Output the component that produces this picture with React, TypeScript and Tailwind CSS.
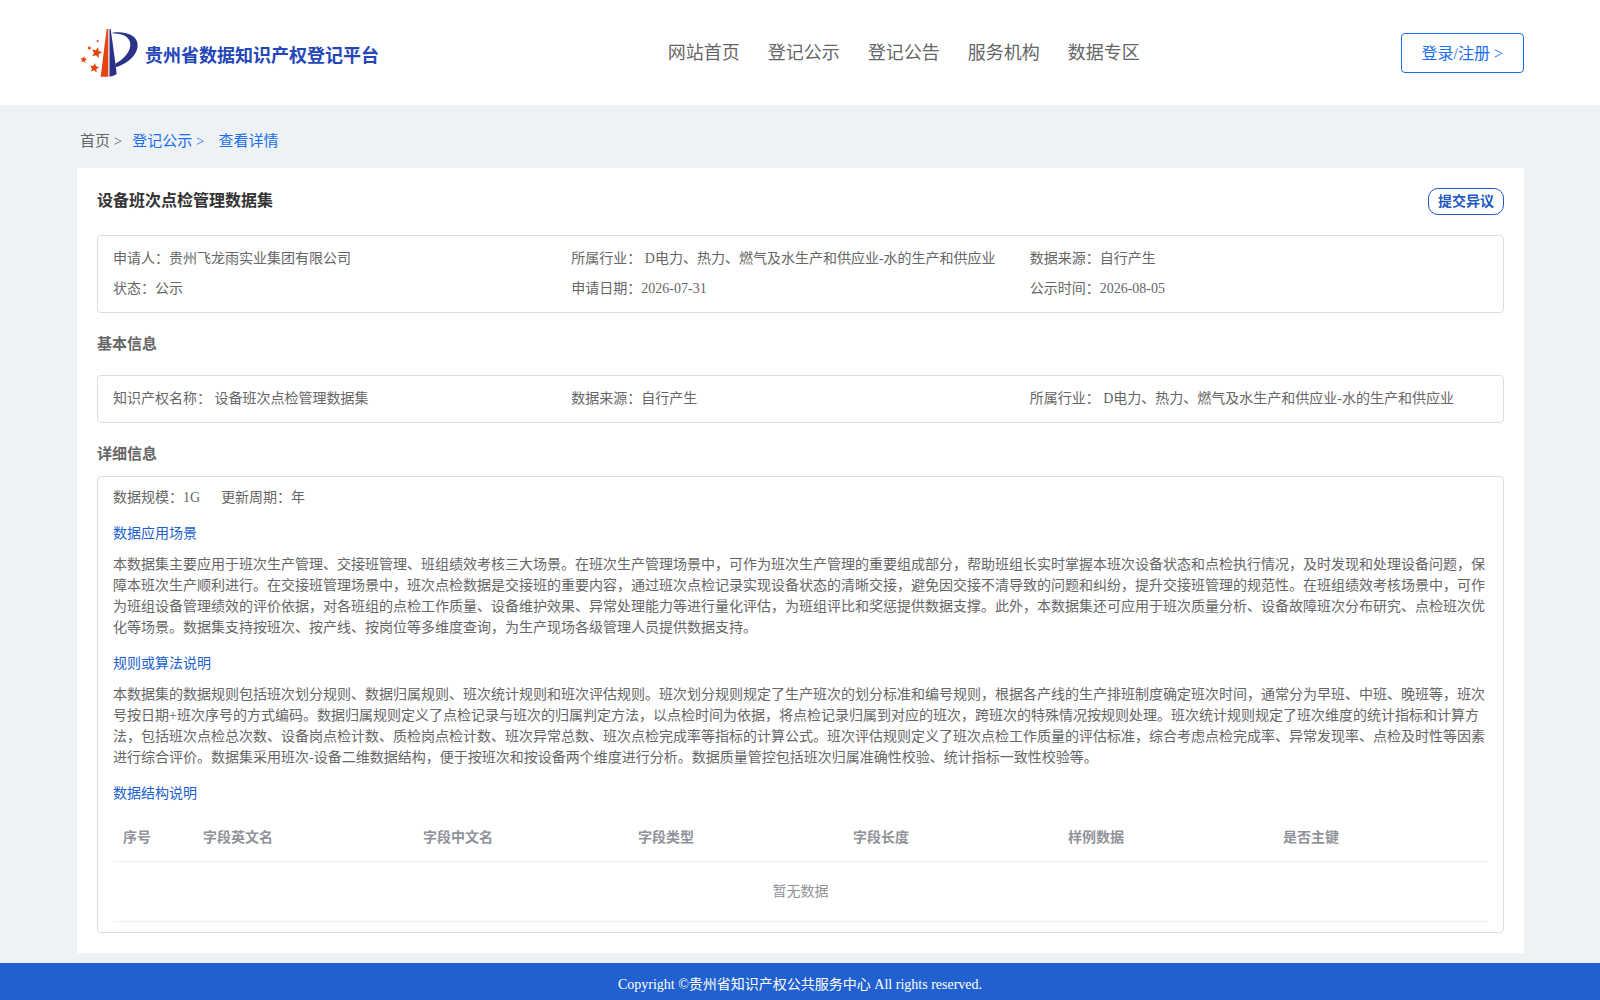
import { useState } from 'react';

interface Field {
  label: string;
  value: string;
}

const NAV_ITEMS = ['网站首页', '登记公示', '登记公告', '服务机构', '数据专区'];

const SUMMARY: Field[] = [
  { label: '申请人：', value: '贵州飞龙雨实业集团有限公司' },
  { label: '所属行业： ', value: 'D电力、热力、燃气及水生产和供应业-水的生产和供应业' },
  { label: '数据来源：', value: '自行产生' },
  { label: '状态：', value: '公示' },
  { label: '申请日期：', value: '2026-07-31' },
  { label: '公示时间：', value: '2026-08-05' },
];

const BASIC: Field[] = [
  { label: '知识产权名称： ', value: '设备班次点检管理数据集' },
  { label: '数据来源：', value: '自行产生' },
  { label: '所属行业： ', value: 'D电力、热力、燃气及水生产和供应业-水的生产和供应业' },
];

const SECTIONS = [
  {
    title: '数据应用场景',
    body: '本数据集主要应用于班次生产管理、交接班管理、班组绩效考核三大场景。在班次生产管理场景中，可作为班次生产管理的重要组成部分，帮助班组长实时掌握本班次设备状态和点检执行情况，及时发现和处理设备问题，保障本班次生产顺利进行。在交接班管理场景中，班次点检数据是交接班的重要内容，通过班次点检记录实现设备状态的清晰交接，避免因交接不清导致的问题和纠纷，提升交接班管理的规范性。在班组绩效考核场景中，可作为班组设备管理绩效的评价依据，对各班组的点检工作质量、设备维护效果、异常处理能力等进行量化评估，为班组评比和奖惩提供数据支撑。此外，本数据集还可应用于班次质量分析、设备故障班次分布研究、点检班次优化等场景。数据集支持按班次、按产线、按岗位等多维度查询，为生产现场各级管理人员提供数据支持。',
  },
  {
    title: '规则或算法说明',
    body: '本数据集的数据规则包括班次划分规则、数据归属规则、班次统计规则和班次评估规则。班次划分规则规定了生产班次的划分标准和编号规则，根据各产线的生产排班制度确定班次时间，通常分为早班、中班、晚班等，班次号按日期+班次序号的方式编码。数据归属规则定义了点检记录与班次的归属判定方法，以点检时间为依据，将点检记录归属到对应的班次，跨班次的特殊情况按规则处理。班次统计规则规定了班次维度的统计指标和计算方法，包括班次点检总次数、设备岗点检计数、质检岗点检计数、班次异常总数、班次点检完成率等指标的计算公式。班次评估规则定义了班次点检工作质量的评估标准，综合考虑点检完成率、异常发现率、点检及时性等因素进行综合评价。数据集采用班次-设备二维数据结构，便于按班次和按设备两个维度进行分析。数据质量管控包括班次归属准确性校验、统计指标一致性校验等。',
  },
];

const COLUMNS = ['序号', '字段英文名', '字段中文名', '字段类型', '字段长度', '样例数据', '是否主键'];

// x, y, radius, rotation in degrees
const STARS = [
  [80, 98, 17, 15],
  [73, 144, 15, 8],
  [41, 119, 11, 8],
  [58, 84, 7, 20],
  [83, 63, 5, 0],
];

function starPoints(x: number, y: number, r: number, rotate: number) {
  return Array.from({ length: 10 }, (_, i) => {
    const a = ((i * 36 + rotate - 90) * Math.PI) / 180;
    const len = i % 2 === 0 ? r : r * 0.45;
    return `${(x + len * Math.cos(a)).toFixed(1)},${(y + len * Math.sin(a)).toFixed(1)}`;
  }).join(' ');
}

function Logo() {
  return (
    <svg viewBox="30 24 177 150" className="h-[50px] w-[59px] shrink-0" aria-hidden="true">
      <g fill="#e5430f">
        <path d="M110 27h5V170H92z" />
        {STARS.map(([x, y, r, rotate]) => (
          <polygon key={x} points={starPoints(x, y, r, rotate)} />
        ))}
      </g>
      <g fill="#2a3288">
        <path d="M118.500 27h3.500L136 128l4 34c-6 4-13 7-21.500 8z" />
        <path d="M127 38c45-5 76 10 76 38 0 30-34 58-67 66v-11c27-14 46-37 45-59-2-22-24-32-54-32z" />
      </g>
    </svg>
  );
}

function FieldBox({ fields }: { fields: Field[] }) {
  return (
    <dl className="grid grid-cols-3 rounded border border-[#dddddd] px-[15px] py-2">
      {fields.map((f) => (
        <div key={f.label} className="flex whitespace-pre leading-[30px]">
          <dt>{f.label}</dt>
          <dd>{f.value}</dd>
        </div>
      ))}
    </dl>
  );
}

export default function App() {
  const [rows] = useState<string[][]>([]);

  return (
    <div className="flex min-h-screen flex-col bg-[#eef2f5] font-['Liberation_Serif','Noto_Sans_CJK_SC',serif] text-sm text-[#666666]">
      <header className="flex h-[105px] items-center bg-white pr-[76px] pl-20">
        <a href="#" className="flex items-center gap-[6px]">
          <Logo />
          <span className="pt-[6px] text-lg leading-6 font-bold whitespace-nowrap text-[#2346b8]">贵州省数据知识产权登记平台</span>
        </a>
        <nav className="flex flex-1 justify-center gap-7 pl-7 text-lg leading-6 whitespace-nowrap">
          {NAV_ITEMS.map((item) => (
            <a key={item} href="#">{item}</a>
          ))}
        </nav>
        <button
          type="button"
          className="h-10 cursor-pointer rounded border border-[#1a6ef0] px-5 pt-[2px] text-base whitespace-nowrap text-[#1a6ef0]"
        >
          登录/注册 &gt;
        </button>
      </header>

      <main className="flex-1 pr-[76px] pb-[10px] pl-[77px]">
        <nav className="flex h-[63px] items-center pt-[10px] pl-[3px] text-[15px] text-[#1a6ef0]">
          <a href="#" className="mr-[10px] text-[#666666]">首页 &gt;</a>
          <a href="#" className="mr-[14px]">登记公示 &gt;</a>
          <a href="#">查看详情</a>
        </nav>

        <div className="bg-white p-5">
          <div className="mb-5 flex items-start justify-between">
            <h1 className="text-base leading-[26px] font-bold text-[#333333]">设备班次点检管理数据集</h1>
            <button
              type="button"
              className="h-[27px] cursor-pointer rounded-[10px] border border-[#2058c4] px-[9px] font-bold text-[#2058c4]"
            >
              提交异议
            </button>
          </div>
          <FieldBox fields={SUMMARY} />

          <h2 className="mt-5 mb-5 text-[15px] leading-[22px] font-bold">基本信息</h2>
          <FieldBox fields={BASIC} />

          <h2 className="mt-5 mb-[11px] text-[15px] leading-[22px] font-bold">详细信息</h2>
          <section className="rounded border border-[#dddddd] px-[15px] py-[10px] leading-[21px]">
            <div className="mb-[15px] flex gap-[21px]">
              <span>数据规模：1G</span>
              <span>更新周期：年</span>
            </div>

            {SECTIONS.map((s) => (
              <div key={s.title} className="mb-[15px]">
                <h3 className="mb-[10px] text-[#2160cf]">{s.title}</h3>
                <p>{s.body}</p>
              </div>
            ))}

            <h3 className="mb-[10px] text-[#2160cf]">数据结构说明</h3>
            <table className="w-full table-fixed text-[#909399]">
              <thead>
                <tr className="border-b border-[#ebeef5]">
                  {COLUMNS.map((col, i) => (
                    <th
                      key={col}
                      className={`px-[10px] py-3 text-left leading-[23px] font-bold ${i === 0 ? 'w-20' : i === 1 ? 'w-[220px]' : ''}`}
                    >
                      {col}
                    </th>
                  ))}
                </tr>
              </thead>
              <tbody>
                {rows.map((row, i) => (
                  <tr key={i} className="border-b border-[#ebeef5]">
                    {row.map((cell, j) => (
                      <td key={j} className="px-[10px] py-3">{cell}</td>
                    ))}
                  </tr>
                ))}
                {rows.length === 0 && (
                  <tr className="border-b border-[#ebeef5]">
                    <td colSpan={COLUMNS.length} className="text-center leading-[59px]">暂无数据</td>
                  </tr>
                )}
              </tbody>
            </table>
          </section>
        </div>
      </main>

      <footer className="bg-[#2160cf] pt-[11px] pb-[5px] text-center leading-[21px] text-white">
        Copyright ©贵州省知识产权公共服务中心 All rights reserved.
      </footer>
    </div>
  );
}
